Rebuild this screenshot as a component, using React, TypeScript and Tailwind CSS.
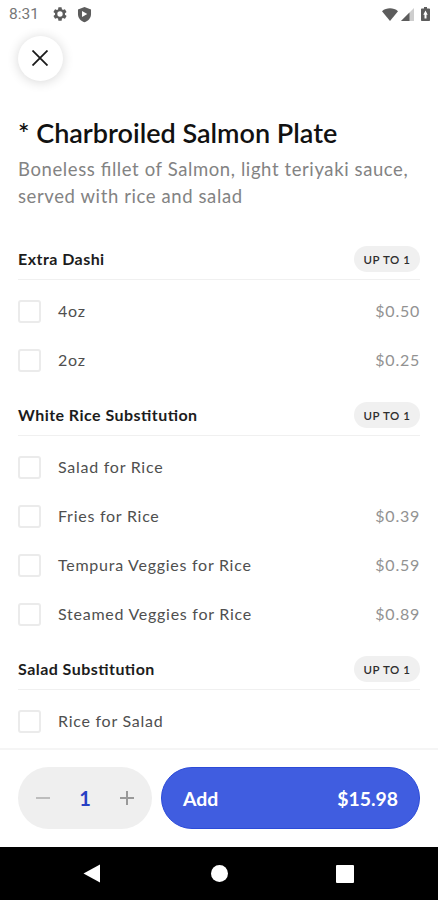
import clsx from 'clsx';

type Option = { label: string; price?: string };
type OptionGroup = { title: string; limit: string; options: Option[] };

const groups: OptionGroup[] = [
  {
    title: 'Extra Dashi',
    limit: 'UP TO 1',
    options: [
      { label: '4oz', price: '$0.50' },
      { label: '2oz', price: '$0.25' },
    ],
  },
  {
    title: 'White Rice Substitution',
    limit: 'UP TO 1',
    options: [
      { label: 'Salad for Rice' },
      { label: 'Fries for Rice', price: '$0.39' },
      { label: 'Tempura Veggies for Rice', price: '$0.59' },
      { label: 'Steamed Veggies for Rice', price: '$0.89' },
    ],
  },
  {
    title: 'Salad Substitution',
    limit: 'UP TO 1',
    options: [{ label: 'Rice for Salad' }],
  },
];

function StatusBar() {
  return (
    <div className="flex h-7 shrink-0 items-center pr-[7px] pl-[9px] text-[#5c5c5c]">
      <span className="w-[43px] font-[Roboto,sans-serif] text-[15.5px] leading-7 text-[#777]">8:31</span>
      {/* settings */}
      <svg className="size-4" viewBox="0 0 24 24" fill="currentColor">
        <path
          fillRule="evenodd"
          d="M19.4 13c.04-.33.07-.66.07-1s-.03-.67-.07-1l2.1-1.65a.5.5 0 0 0 .12-.64l-2-3.46a.5.5 0 0 0-.61-.22l-2.49 1a7.3 7.3 0 0 0-1.69-.98l-.38-2.65A.49.49 0 0 0 14 2h-4a.49.49 0 0 0-.49.42l-.38 2.65c-.61.25-1.17.59-1.69.98l-2.49-1a.49.49 0 0 0-.61.22l-2 3.46a.49.49 0 0 0 .12.64L4.6 11c-.04.33-.07.66-.07 1s.03.67.07 1l-2.1 1.65a.5.5 0 0 0-.12.64l2 3.46c.12.22.39.3.61.22l2.49-1c.52.4 1.08.73 1.69.98l.38 2.65c.03.24.24.4.49.4h4c.25 0 .46-.18.49-.42l.38-2.65c.61-.25 1.17-.59 1.69-.98l2.49 1c.23.09.49 0 .61-.22l2-3.46a.5.5 0 0 0-.12-.64L19.4 13ZM12 16a4 4 0 1 1 0-8 4 4 0 0 1 0 8Z"
        />
      </svg>
      {/* play protect */}
      <svg className="ml-2 size-[17px]" viewBox="0 0 24 24" fill="currentColor">
        <path
          fillRule="evenodd"
          d="M12 1.500 2.800 4.800v6.700c0 5.300 3.900 9.600 9.200 11.400 5.300-1.800 9.200-6.100 9.200-11.400V4.800L12 1.500ZM8.500 7v8.600l7.400-4.300L8.500 7Z"
        />
      </svg>
      <svg className="ml-auto h-[13px] w-4" viewBox="0 0 16 13" fill="currentColor">
        <path d="M8 13 0 3.200C4.500-.6 11.500-.6 16 3.200L8 13Z" />
      </svg>
      <svg className="ml-[3px] h-[13px] w-[13px]" viewBox="0 0 13 13" fill="currentColor">
        <path d="M0 13 13 0v13H0Z" opacity="0.3" />
        <path d="M0 13 8.500 4.500V13H0Z" />
      </svg>
      <svg className="mr-px ml-[7px] h-[14px] w-[9px]" viewBox="0 0 9 14" fill="currentColor">
        <path
          fillRule="evenodd"
          d="M3 0h3v1.500h2.200c.5 0 .8.3.8.8v10.900c0 .5-.3.8-.8.8H.8c-.5 0-.8-.3-.8-.8V2.300c0-.5.3-.8.800-.8H3V0Zm1.500 3.500L2.300 7.800h1.200v3.700h2V7.800h1.200L4.500 3.500Z"
        />
      </svg>
    </div>
  );
}

function OptionRow({ label, price }: Option) {
  return (
    <label className="flex h-[49px] items-center">
      <span className="size-[23px] rounded-[3px] border-2 border-[#ebebeb] bg-white" />
      <span className="ml-[17px] pb-px text-base tracking-[0.74px] text-[#4f4f4f]">{label}</span>
      {price && <span className="ml-auto pb-[2px] text-base tracking-[0.75px] text-[#929292]">{price}</span>}
    </label>
  );
}

function Group({ group }: { group: OptionGroup }) {
  return (
    <section className="mb-[17px]">
      <div className="mb-[7px] flex items-center justify-between border-b border-[#f0f0f0] pb-[7px]">
        <h2 className="text-base font-bold tracking-[0.46px] text-[#1c1c1c] [font-feature-settings:'liga']">
          {group.title}
        </h2>
        <span className="flex h-[26px] w-[66px] items-center justify-center rounded-full bg-[#f0f0f0] pt-px text-[11.5px] font-semibold tracking-[0.6px] text-[#2e2e2e]">
          {group.limit}
        </span>
      </div>
      {group.options.map((option) => (
        <OptionRow key={option.label} {...option} />
      ))}
    </section>
  );
}

function Stepper() {
  return (
    <div className="flex h-[62px] w-[134px] items-center justify-between rounded-full bg-[#efefef] px-[18px]">
      <button className="flex h-[14px] w-[14px] items-center">
        <span className="h-[2px] w-full bg-[#bdbdbd]" />
      </button>
      <span className="text-xl font-bold text-[#2740c4]">1</span>
      <button>
        <svg className="size-[14px]" viewBox="0 0 14 14" stroke="#999" strokeWidth="2">
          <path d="M0 7h14M7 0v14" />
        </svg>
      </button>
    </div>
  );
}

function NavBar() {
  return (
    <div className="flex h-[53px] shrink-0 items-center bg-black pl-[83px]">
      <svg className="h-[19px] w-[17px]" viewBox="0 0 17 19" fill="#fff">
        <path d="M17 .5v18L.5 9.500 17 .5Z" />
      </svg>
      <span className="ml-[111px] size-[17px] rounded-full bg-white" />
      <span className="ml-[108px] size-[18px] rounded-[1px] bg-white" />
    </div>
  );
}

export default function App() {
  return (
    <div className="flex h-[900px] w-[438px] flex-col overflow-hidden bg-white font-[Lato,sans-serif]">
      <StatusBar />
      <main className="min-h-0 flex-1 overflow-hidden px-[18px] pt-2">
        <button className="flex size-[45px] items-center justify-center rounded-full bg-white pr-px pb-px shadow-[0_1px_12px_rgba(0,0,0,0.16)]">
          <svg className="size-4" viewBox="0 0 16 16" stroke="#1a1a1a" strokeWidth="1.8">
            <path d="M.5.5l15 15M15.500.5l-15 15" />
          </svg>
        </button>
        <h1 className="mt-[35px] text-[27px] leading-[34px] font-semibold whitespace-nowrap text-[#111]">
          * Charbroiled Salmon Plate
        </h1>
        <p className="mt-[6px] mb-[36px] text-[18.5px] leading-[27px] tracking-[0.6px] whitespace-nowrap text-[#838383] [font-feature-settings:'liga']">
          Boneless fillet of Salmon, light teriyaki sauce,
          <br />
          served with rice and salad
        </p>
        {groups.map((group) => (
          <Group key={group.title} group={group} />
        ))}
      </main>
      <footer className="flex h-[99px] shrink-0 items-center gap-[9px] border-t-2 border-[#f5f5f5] px-[18px] pb-[2px]">
        <Stepper />
        <button
          className={clsx(
            'flex h-[62px] flex-1 items-center justify-between rounded-full px-[21px] pt-[2px]',
            'border border-[#2c4bd8] bg-[#405de0] text-[19.4px] font-bold text-white'
          )}
        >
          <span>Add</span>
          <span>$15.98</span>
        </button>
      </footer>
      <NavBar />
    </div>
  );
}
